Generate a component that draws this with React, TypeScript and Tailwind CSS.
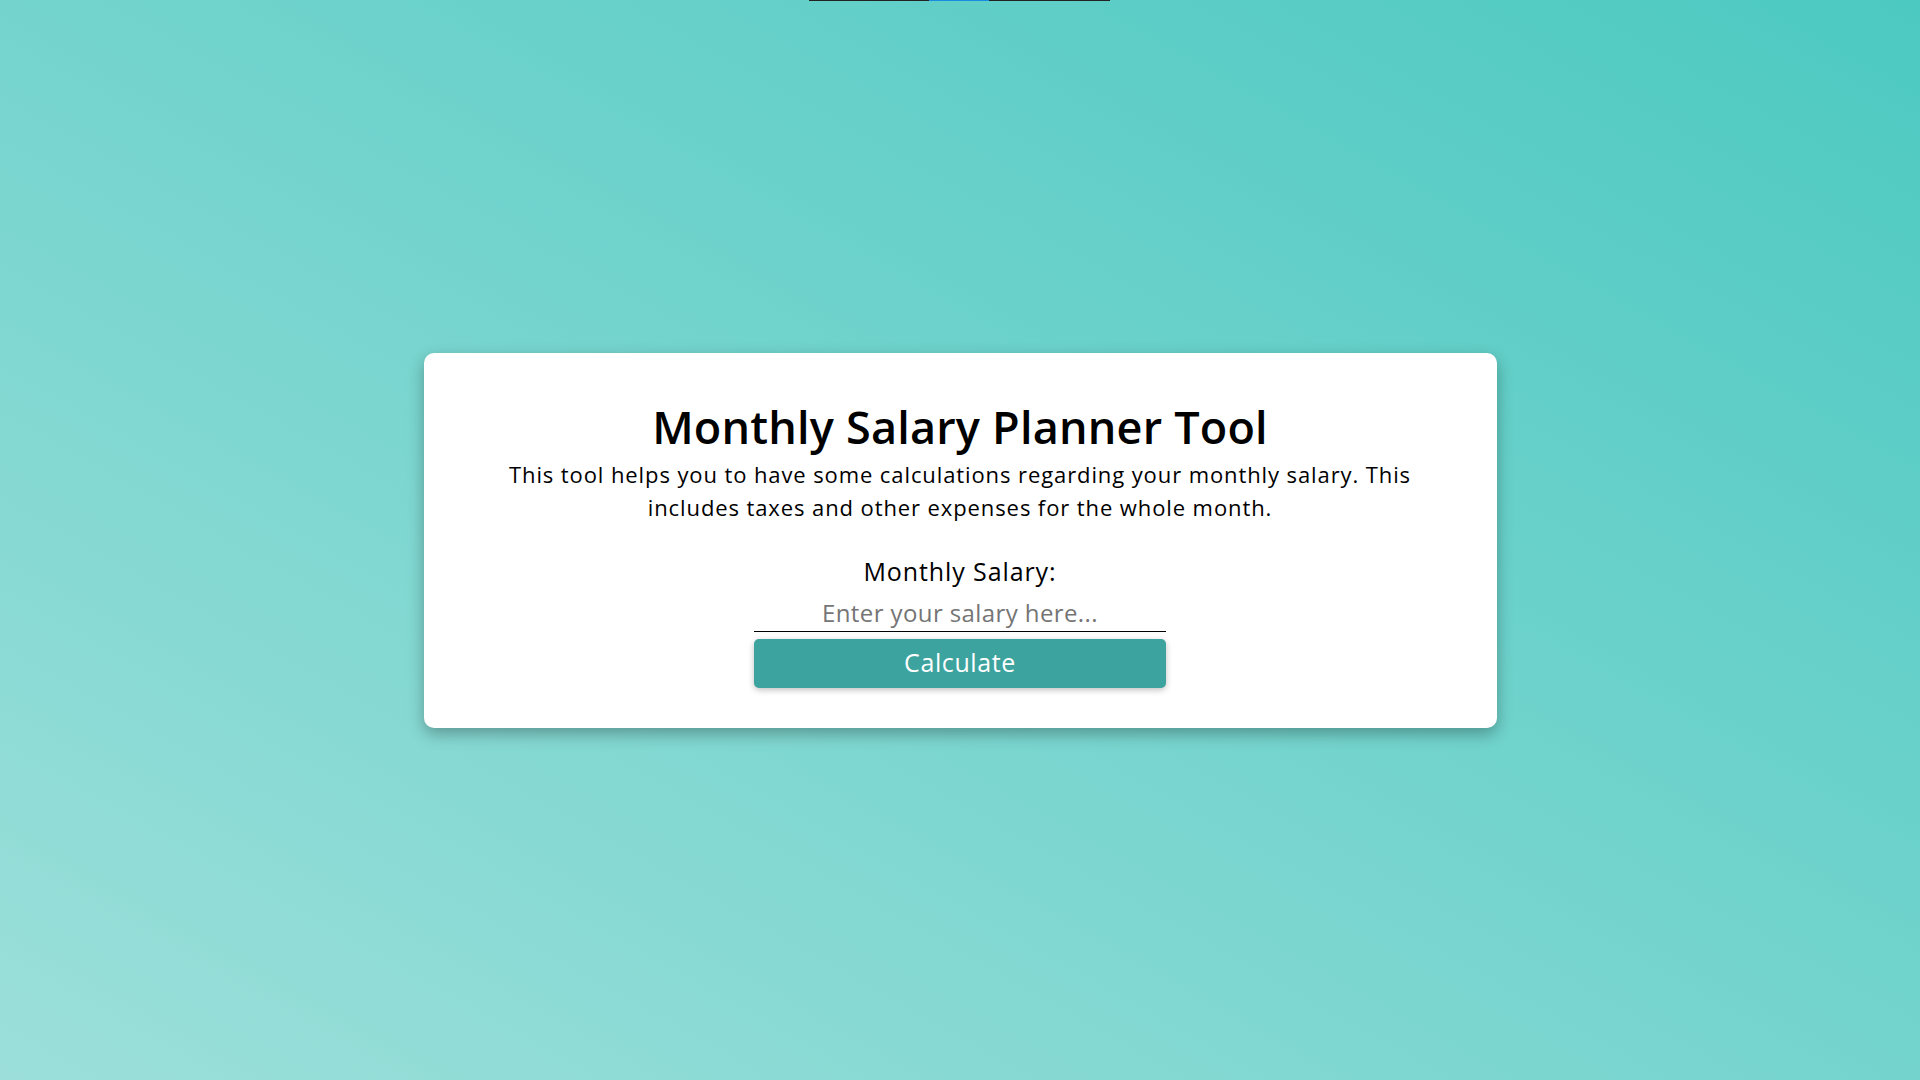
export default function App() {
  return (
    <div className="relative min-h-screen w-full flex items-center justify-center bg-[linear-gradient(to_top_right,#9cdfda,#4cc9c1)] font-['Open_Sans',sans-serif]">
      {/* thin progress strip pinned to the top edge */}
      <div className="absolute top-0 left-[809px] flex h-px w-[301px]">
        <div className="w-[120px] bg-[#222]"></div>
        <div className="w-[60px] bg-[#1a8be0]"></div>
        <div className="flex-1 bg-[#222]"></div>
      </div>

      <div className="w-[1073px] rounded-[10px] bg-white pt-[46px] pb-[40px] text-center shadow-[0_6px_16px_rgba(0,0,0,0.3)]">
        <h1 className="text-[45px] leading-[56px] font-semibold text-black tracking-[0.2px]">Monthly Salary Planner Tool</h1>
        <p className="mx-auto mt-[3px] max-w-[930px] text-[22px] leading-[33px] tracking-[0.9px] text-black">
          This tool helps you to have some calculations regarding your monthly salary. This includes taxes and other expenses for the whole month.
        </p>

        <div className="mt-[31px] flex flex-col items-center">
          <label htmlFor="salary" className="text-[25px] leading-[32px] tracking-[0.9px] text-black">Monthly Salary:</label>
          <input
            id="salary"
            type="text"
            placeholder="Enter your salary here..."
            className="mt-[7px] h-[38px] w-[412px] border-b border-black bg-transparent text-center text-[24px] tracking-[0.4px] outline-none placeholder:text-[#757575]"
          />
          <button className="mt-[7px] h-[49px] w-[412px] rounded-[5px] bg-[#3ca39e] text-[25px] font-medium tracking-[0.6px] text-white shadow-[0_2px_6px_rgba(0,0,0,0.25)]">
            Calculate
          </button>
        </div>
      </div>
    </div>
  )
}
